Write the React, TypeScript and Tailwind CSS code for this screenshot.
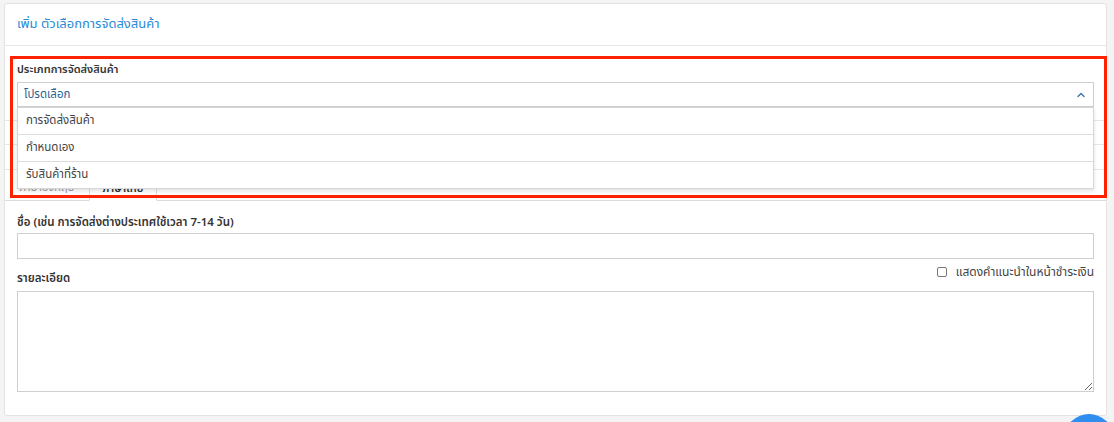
import { ChevronUp } from 'lucide-react'

const shippingTypes = ['การจัดส่งสินค้า', 'กำหนดเอง', 'รับสินค้าที่ร้าน']

export default function App() {
  return (
    <div
      className="relative w-[1114px] h-[422px] overflow-hidden bg-[#f4f4f4] pt-[3px] pl-[4px] pr-[7px]"
      style={{ fontFamily: '"Noto Sans Thai", "Noto Sans", Tahoma, sans-serif' }}
    >
      <div className="bg-white border border-[#e3e3e3] rounded-[3px] h-[413px]">
        {/* Card header */}
        <div className="h-[42px] border-b border-[#e6e6e6] px-3 flex items-center">
          <h2 className="text-[13px] text-[#2a8ad6]">เพิ่ม ตัวเลือกการจัดส่งสินค้า</h2>
        </div>

        <div className="px-3">
          {/* Shipping type select */}
          <div className="pt-[15px]">
            <label className="block text-[11px] font-semibold text-[#333] leading-[18px] mb-[3px]">
              ประเภทการจัดส่งสินค้า
            </label>
            <div className="relative">
              <div className="h-[25px] border border-[#cfcfcf] flex items-center justify-between pl-[6px] pr-[6px]">
                <span className="text-[11.5px] text-[#2d5f93]">โปรดเลือก</span>
                <ChevronUp size={12} strokeWidth={2.5} className="text-[#3a6ea5]" />
              </div>

              {/* Open dropdown list */}
              <ul className="absolute left-0 right-0 top-full z-20 bg-white border border-[#d6d6d6] shadow-[0_2px_4px_rgba(0,0,0,0.12)]">
                {shippingTypes.map((t, i) => (
                  <li
                    key={t}
                    className={`flex items-center pl-[8px] text-[11.5px] text-[#444] ${i > 0 ? 'h-[27px] border-t border-[#dcdcdc]' : 'h-[26px]'}`}
                  >
                    {t}
                  </li>
                ))}
              </ul>
            </div>
          </div>

          {/* Rows hidden under the dropdown */}
          <div className="-mx-3 mt-[13px] border-t border-[#e6e6e6] h-[24px]" />
          <div className="-mx-3 border-t border-[#e6e6e6] h-[25px]" />

          {/* Language tabs */}
          <div className="-mx-3 flex items-end h-[32px] border-t border-[#e6e6e6] border-b border-b-[#dcdcdc]">
            <div className="w-[84px] h-[31px] flex items-center justify-center pt-[8px] text-[11px] text-[#999]">
              ภาษาอังกฤษ
            </div>
            <div className="w-[68px] h-[32px] -mb-px bg-white border border-[#dcdcdc] border-b-white flex items-center justify-center pt-[8px] text-[11px] font-semibold text-[#333]">
              ภาษาไทย
            </div>
          </div>

          {/* Name */}
          <label className="block mt-[14px] text-[11.5px] font-semibold text-[#333] leading-[16px] mb-[2px]">
            ชื่อ (เช่น การจัดส่งต่างประเทศใช้เวลา 7-14 วัน)
          </label>
          <input className="block w-full h-[26px] border border-[#cfcfcf] outline-none" />

          {/* Description */}
          <div className="flex justify-between h-[32px]">
            <label className="self-end mb-[4px] text-[11.5px] font-semibold text-[#333] leading-[16px]">
              รายละเอียด
            </label>
            <label className="self-start mt-[5px] flex items-center gap-[9px] text-[12px] text-[#444] leading-[16px]">
              <span className="w-[10px] h-[10px] border border-[#777] rounded-[2px] bg-white" />
              แสดงคำแนะนำในหน้าชำระเงิน
            </label>
          </div>
          <textarea className="block w-full h-[101px] border border-[#cfcfcf] outline-none resize-y" />
        </div>
      </div>

      {/* Highlight around the shipping type field */}
      <div className="absolute left-[10px] top-[56px] w-[1097px] h-[142px] border-[3px] border-[#ff2200] z-30 pointer-events-none" />

      {/* Floating action button */}
      <div className="absolute left-[1064px] top-[414px] w-[50px] h-[50px] rounded-full bg-[#2f8ef0]" />
    </div>
  )
}
